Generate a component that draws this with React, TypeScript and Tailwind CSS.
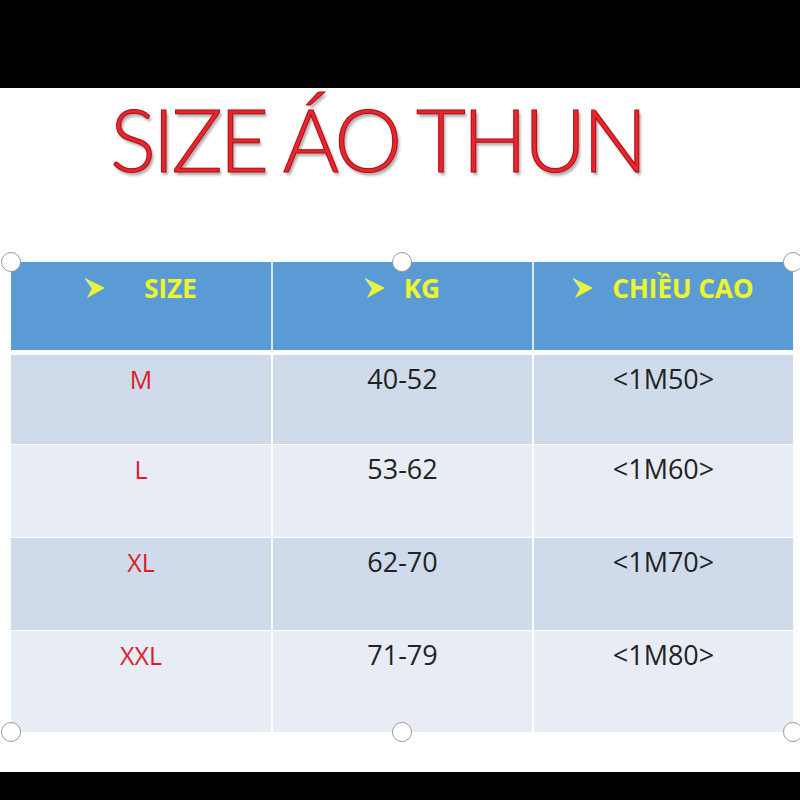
const rows = [
    { size: "M", kg: "40-52", h: "<1M50>", dark: true },
    { size: "L", kg: "53-62", h: "<1M60>", dark: false },
    { size: "XL", kg: "62-70", h: "<1M70>", dark: true },
    { size: "XXL", kg: "71-79", h: "<1M80>", dark: false },
];

function Arrow() {
    return (
        <svg width="20" height="22" viewBox="0 0 20 22" className="shrink-0">
            <polygon points="0,1 20,11 2,21 7,11" fill="#e6f43a" />
            <polyline points="0,1 7,11" stroke="#bfe8f0" strokeWidth="1.2" fill="none" />
        </svg>
    );
}

function HeaderCell({ label, first, extraGap }: { label: string; first?: boolean; extraGap?: boolean }) {
    return (
        <div className={(first ? "" : "border-l-2 border-[#dbe9f6] ") + "flex justify-center items-start pt-[8px] bg-[#5b9bd5]"}>
            <span className="flex items-center gap-[19px] text-[#e8f53a] text-[26px] leading-[36px] font-bold [text-shadow:0_0_1px_#a3b040]">
                <Arrow />
                <span className={extraGap ? "pl-[20px]" : ""}>{label}</span>
            </span>
        </div>
    );
}

function Handle({ className }: { className: string }) {
    return (
        <div
            className={
                "absolute w-[20px] h-[20px] rounded-full bg-white border border-[#9a9a9a] -translate-x-1/2 -translate-y-1/2 " +
                className
            }
        />
    );
}

export default function App() {
    return (
        <div className="w-[800px] h-[800px] bg-black flex flex-col" style={{ fontFamily: "'Open Sans', 'Noto Sans', sans-serif" }}>
            <div className="h-[88px] shrink-0" />
            <div className="h-[684px] bg-white shrink-0 flex flex-col">
                <div className="h-[174px] shrink-0 pl-[110px]">
                    <h1
                        className="text-[86px] leading-[102px] text-[#e8262e] tracking-[-3.5px] [text-shadow:0_0_1px_#8c0a10,2px_3px_3px_rgba(0,0,0,0.35)]"
                        style={{ fontFamily: "Lato, 'Noto Sans', sans-serif", fontWeight: 300, WebkitTextStroke: "1px #b30f17" }}
                    >
                        SIZE ÁO THUN
                    </h1>
                </div>
                <div className="relative ml-[11px] w-[782px] h-[470px]">
                    <div className="grid grid-cols-[260px_261px_261px] grid-rows-[88px_4px_90px_93px_93px_102px] h-full border-b border-[#d0d6de]">
                        <HeaderCell label="SIZE" first extraGap />
                        <HeaderCell label="KG" />
                        <HeaderCell label="CHIỀU CAO" />
                        <div className="col-span-3 bg-white" />
                        {rows.map((r) => (
                            <div key={r.size} className="contents">
                                <div className={(r.dark ? "bg-[#cfdbeb]" : "bg-[#e8edf5]") + " flex justify-center pt-[6px] text-[25px] leading-[36px] text-[#dc1c26] border-t border-white"}>
                                    {r.size}
                                </div>
                                <div className={(r.dark ? "bg-[#cfdbeb]" : "bg-[#e8edf5]") + " flex justify-center pt-[6px] text-[27px] leading-[36px] text-[#222] border-l-2 border-t border-white"}>
                                    {r.kg}
                                </div>
                                <div className={(r.dark ? "bg-[#cfdbeb]" : "bg-[#e8edf5]") + " flex justify-center pt-[6px] text-[27px] leading-[36px] text-[#222] border-l-2 border-t border-white"}>
                                    {r.h}
                                </div>
                            </div>
                        ))}
                    </div>
                    <Handle className="left-0 top-0" />
                    <Handle className="left-[391px] top-0" />
                    <Handle className="left-[782px] top-0" />
                    <Handle className="left-0 top-[470px]" />
                    <Handle className="left-[391px] top-[470px]" />
                    <Handle className="left-[782px] top-[470px]" />
                </div>
            </div>
        </div>
    );
}
